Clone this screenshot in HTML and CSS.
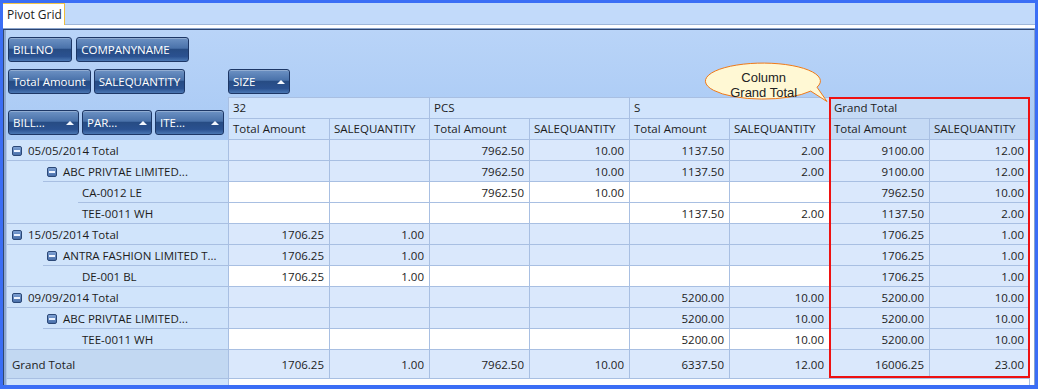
FILE: index.html
```html
<!DOCTYPE html>
<html lang="en">

<head>
    <meta charset="UTF-8">
    <meta name="viewport" content="width=device-width, initial-scale=1.0">
    <title>Pivot Grid</title>
    <link rel="stylesheet" href="styles.css">
</head>

<body>

    <div class="window">
        <div class="tab_strip">
            <div class="tab">Pivot Grid</div>
        </div>
        <div class="tab_gap"></div>

        <div class="pivot_panel">
            <!-- filter fields -->
            <div class="field_area filter_area">
                <div class="field_btn filter_btn">BILLNO</div>
                <div class="field_btn filter_btn">COMPANYNAME</div>
            </div>

            <!-- data fields + column fields -->
            <div class="data_row">
                <div class="field_area data_area">
                    <div class="field_btn data_btn">Total Amount</div>
                    <div class="field_btn data_btn">SALEQUANTITY</div>
                </div>
                <div class="field_area column_area">
                    <div class="field_btn sort_btn w_size">SIZE</div>
                </div>
            </div>

            <div class="pivot_grid">
                <div class="row_fields">
                    <div class="field_btn sort_btn w_bill">BILL...</div>
                    <div class="field_btn sort_btn w_par">PAR...</div>
                    <div class="field_btn sort_btn w_ite">ITE...</div>
                </div>
                <div class="head_fill"></div>
                <div class="body_fill"></div>

                <div class="hc top span2">32</div>
                <div class="hc top span2">PCS</div>
                <div class="hc top span2">S</div>
                <div class="hc top span2 gt">Grand Total</div>

                <div class="hc">Total Amount</div>
                <div class="hc">SALEQUANTITY</div>
                <div class="hc">Total Amount</div>
                <div class="hc">SALEQUANTITY</div>
                <div class="hc">Total Amount</div>
                <div class="hc">SALEQUANTITY</div>
                <div class="hc gt">Total Amount</div>
                <div class="hc gt">SALEQUANTITY</div>

                <!-- 05/05/2014 -->
                <div class="rh lv0 ln0"><span class="collapse"></span>05/05/2014 Total</div>
                <div class="c s"></div>
                <div class="c s"></div>
                <div class="c s">7962.50</div>
                <div class="c s">10.00</div>
                <div class="c s">1137.50</div>
                <div class="c s">2.00</div>
                <div class="c s">9100.00</div>
                <div class="c s">12.00</div>

                <div class="rh lv1 ln1"><span class="collapse"></span>ABC PRIVTAE LIMITED...</div>
                <div class="c s"></div>
                <div class="c s"></div>
                <div class="c s">7962.50</div>
                <div class="c s">10.00</div>
                <div class="c s">1137.50</div>
                <div class="c s">2.00</div>
                <div class="c s">9100.00</div>
                <div class="c s">12.00</div>

                <div class="rh lv2 ln2">CA-0012 LE</div>
                <div class="c"></div>
                <div class="c"></div>
                <div class="c">7962.50</div>
                <div class="c">10.00</div>
                <div class="c"></div>
                <div class="c"></div>
                <div class="c s">7962.50</div>
                <div class="c s">10.00</div>

                <div class="rh lv2 ln0">TEE-0011 WH</div>
                <div class="c"></div>
                <div class="c"></div>
                <div class="c"></div>
                <div class="c"></div>
                <div class="c">1137.50</div>
                <div class="c">2.00</div>
                <div class="c s">1137.50</div>
                <div class="c s">2.00</div>

                <!-- 15/05/2014 -->
                <div class="rh lv0 ln0"><span class="collapse"></span>15/05/2014 Total</div>
                <div class="c s">1706.25</div>
                <div class="c s">1.00</div>
                <div class="c s"></div>
                <div class="c s"></div>
                <div class="c s"></div>
                <div class="c s"></div>
                <div class="c s">1706.25</div>
                <div class="c s">1.00</div>

                <div class="rh lv1 ln1"><span class="collapse"></span>ANTRA FASHION LIMITED T...</div>
                <div class="c s">1706.25</div>
                <div class="c s">1.00</div>
                <div class="c s"></div>
                <div class="c s"></div>
                <div class="c s"></div>
                <div class="c s"></div>
                <div class="c s">1706.25</div>
                <div class="c s">1.00</div>

                <div class="rh lv2 ln0">DE-001 BL</div>
                <div class="c">1706.25</div>
                <div class="c">1.00</div>
                <div class="c"></div>
                <div class="c"></div>
                <div class="c"></div>
                <div class="c"></div>
                <div class="c s">1706.25</div>
                <div class="c s">1.00</div>

                <!-- 09/09/2014 -->
                <div class="rh lv0 ln0"><span class="collapse"></span>09/09/2014 Total</div>
                <div class="c s"></div>
                <div class="c s"></div>
                <div class="c s"></div>
                <div class="c s"></div>
                <div class="c s">5200.00</div>
                <div class="c s">10.00</div>
                <div class="c s">5200.00</div>
                <div class="c s">10.00</div>

                <div class="rh lv1 ln1"><span class="collapse"></span>ABC PRIVTAE LIMITED...</div>
                <div class="c s"></div>
                <div class="c s"></div>
                <div class="c s"></div>
                <div class="c s"></div>
                <div class="c s">5200.00</div>
                <div class="c s">10.00</div>
                <div class="c s">5200.00</div>
                <div class="c s">10.00</div>

                <div class="rh lv2 ln0">TEE-0011 WH</div>
                <div class="c"></div>
                <div class="c"></div>
                <div class="c"></div>
                <div class="c"></div>
                <div class="c">5200.00</div>
                <div class="c">10.00</div>
                <div class="c s">5200.00</div>
                <div class="c s">10.00</div>

                <!-- grand total row -->
                <div class="rh grand_label">Grand Total</div>
                <div class="c s">1706.25</div>
                <div class="c s">1.00</div>
                <div class="c s">7962.50</div>
                <div class="c s">10.00</div>
                <div class="c s">6337.50</div>
                <div class="c s">12.00</div>
                <div class="c s">16006.25</div>
                <div class="c s">23.00</div>

                <div class="rh rest"></div>
                <div class="c rest span8"></div>
            </div>
        </div>

        <!-- annotation overlays -->
        <div class="grand_total_mark"></div>
        <svg class="callout" width="135" height="48" viewBox="0 0 135 48">
            <path d="M110.7 33.1 A57.5 18 0 1 1 117 29.2 L127 43.5 Z" fill="#fff8d4" stroke="#f07a18" stroke-width="1" />
            <text x="63.7" y="24" text-anchor="middle">Column</text>
            <text x="63.7" y="39" text-anchor="middle">Grand Total</text>
        </svg>
    </div>

</body>

</html>
```

FILE: styles.css
```css
* {
    box-sizing: border-box;
}

body {
    margin: 0;
    background: #3b6ef5;
    font-family: "Open Sans", "Noto Sans", sans-serif;
    font-size: 11.5px;
    color: #1c1c1c;
}

.window {
    position: relative;
    margin: 3px 3px 0 3px;
    width: 1032px;
    height: 382px;
    display: flex;
    flex-direction: column;
}

/* tab strip */
.tab_strip {
    height: 22px;
    background: #c2dafa;
    border-bottom: 1px solid #9fb7d9;
    display: flex;
}

.tab {
    height: 22px;
    width: 62px;
    padding-left: 4px;
    line-height: 21px;
    font-size: 12px;
    background: #fff;
    border-top: 1px solid #f3c54a;
    border-right: 1px solid #f0bd3c;
}

.tab_gap {
    height: 4px;
    background: #fff;
    border-bottom: 1px solid #8aa4cc;
}

/* main panel */
.pivot_panel {
    flex: 1;
    display: flex;
    flex-direction: column;
    border-top: 1px solid #2d4470;
    border-left: 1px solid #30476f;
    border-right: 1px solid #8aa4cc;
    padding-left: 2px;
    box-shadow: inset 2px 0 0 #8ea8d0;
    background: linear-gradient(#b9d4f8, #a8c9f4 110px);
}

.field_area {
    display: flex;
    gap: 4px;
}

.filter_area {
    padding: 7px 0 0 2px;
}

.data_row {
    display: flex;
    margin-top: 7px;
}

.data_area {
    width: 222px;
    padding-left: 2px;
    gap: 3px;
}

.field_btn {
    height: 25px;
    line-height: 23px;
    color: #fff;
    white-space: nowrap;
    border: 1px solid #1d3766;
    border-radius: 3px;
    background: linear-gradient(#6d92c4 0%, #4a72aa 44%, #274c84 50%, #2a5190 80%, #4a77b3 100%);
    box-shadow: inset 0 1px 0 rgba(255, 255, 255, 0.25);
}

.filter_btn {
    padding: 0 18px 0 4px;
}

.data_btn {
    padding: 0 4px;
}

.sort_btn {
    display: flex;
    align-items: center;
    justify-content: space-between;
    padding: 0 4px;
}

.sort_btn::after {
    content: "";
    border-left: 4px solid transparent;
    border-right: 4px solid transparent;
    border-bottom: 4px solid #f4f8ff;
}

.w_size {
    width: 62px;
}

.w_bill {
    width: 71px;
}

.w_par {
    width: 70px;
}

.w_ite {
    width: 69px;
}

/* pivot grid */
.pivot_grid {
    flex: 1;
    margin-top: 3px;
    display: grid;
    grid-template-columns: 223px 101px repeat(7, 100px) 1fr;
    grid-template-rows: 22px 21px repeat(10, 21px) 29px 1fr;
}

.row_fields {
    grid-column: 1;
    grid-row: 1 / 3;
    display: flex;
    align-items: flex-end;
    gap: 3px;
    padding: 0 0 5px 2px;
    border-right: 1px solid #a8bfe2;
}

.head_fill {
    grid-column: 10;
    grid-row: 1 / 3;
}

.body_fill {
    grid-column: 10;
    grid-row: 3 / -1;
    background: #fff;
}

.hc {
    background: #d1e4fc;
    border-right: 1px solid #a8bfe2;
    border-bottom: 1px solid #a8bfe2;
    padding-left: 4px;
    line-height: 20px;
    white-space: nowrap;
    overflow: hidden;
}

.hc.top {
    border-top: 1px solid #a8bfe2;
}

.hc.gt {
    background: #c5daf5;
}

.span2 {
    grid-column: span 2;
}

.span8 {
    grid-column: span 8;
}

/* row headers */
.rh {
    display: flex;
    align-items: center;
    white-space: nowrap;
    border-left: 1px solid #b3c9e8;
    border-right: 1px solid #a8bfe2;
    background: #d0e4fb linear-gradient(#a8bfe2, #a8bfe2) no-repeat right bottom;
}

.lv0 {
    padding-left: 5px;
}

.lv1 {
    padding-left: 40px;
}

.lv2 {
    padding-left: 75px;
}

.ln0 {
    background-size: 100% 1px;
}

.ln1 {
    background-size: calc(100% - 36px) 1px;
}

.ln2 {
    background-size: calc(100% - 71px) 1px;
}

.collapse {
    width: 10px;
    height: 10px;
    margin-right: 6px;
    border: 1px solid #2b4877;
    border-radius: 2px;
    background: linear-gradient(#7c9fd2, #4a70aa);
    display: flex;
    align-items: center;
    justify-content: center;
}

.collapse::after {
    content: "";
    width: 6px;
    height: 2px;
    background: #eef4ff;
}

.grand_label {
    padding-left: 5px;
    background: #c2d8f2;
    border-bottom: 1px solid #a8bfe2;
}

.rh.rest {
    background: #d0e4fb;
}

/* data cells */
.c {
    background: #fff;
    border-right: 1px solid #a8bfe2;
    border-bottom: 1px solid #a8bfe2;
    padding-right: 5px;
    text-align: right;
    display: flex;
    align-items: center;
    justify-content: flex-end;
}

.c.s {
    background: #dae8fc;
}

.c.rest {
    border-bottom: none;
}

/* annotations */
.grand_total_mark {
    position: absolute;
    left: 826px;
    top: 94px;
    width: 201px;
    height: 281px;
    border: 2px solid #ee1111;
}

.callout {
    position: absolute;
    left: 697px;
    top: 55px;
    font-family: "Liberation Sans", Arial, sans-serif;
    font-size: 13px;
    fill: #222;
}
```
